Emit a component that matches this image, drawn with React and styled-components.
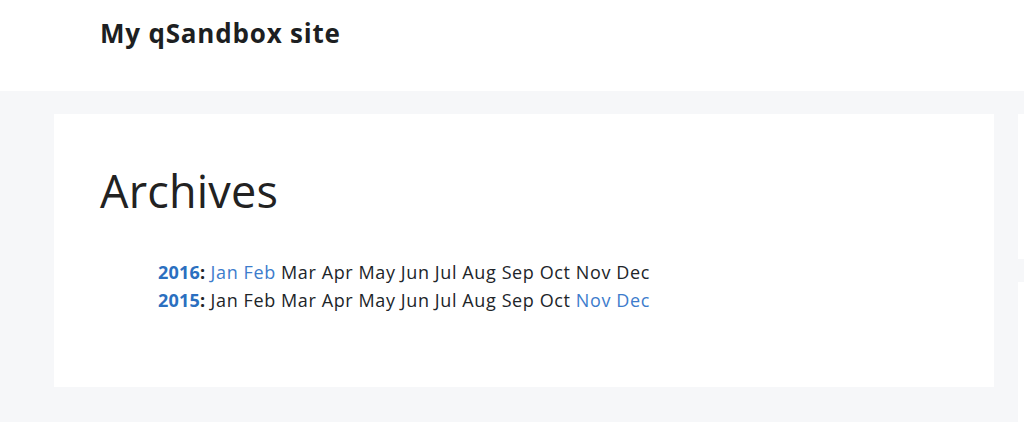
import React from "react";
import styled, { createGlobalStyle } from "styled-components";

const Global = createGlobalStyle`
  html, body { margin: 0; padding: 0; background: #f6f7f9; }
  body { font-family: "Open Sans", "Noto Sans", sans-serif; color: #212529; }
`;

const Header = styled.header`
  background: #fff;
  height: 91px;
  padding-left: 100px;
  box-sizing: border-box;
`;

const SiteTitle = styled.div`
  font-size: 26px;
  font-weight: 700;
  line-height: 1;
  padding-top: 20px;
  color: #1d1f22;
  letter-spacing: 0.8px;
`;

const Body = styled.div`
  display: grid;
  grid-template-columns: 940px 320px;
  gap: 24px;
  padding: 23px 0 0 54px;
  width: 100%;
  box-sizing: border-box;
  overflow: hidden;
`;

const Card = styled.main`
  background: #fff;
  height: 273px;
  box-sizing: border-box;
  padding: 50px 46px 0;
`;

const Side = styled.aside`
  display: flex;
  flex-direction: column;
  gap: 23px;
`;

const SideCard = styled.div`
  background: #fff;
  height: ${(p) => p.$h}px;
`;

const Title = styled.h1`
  margin: 0;
  font-size: 45px;
  font-weight: 400;
  line-height: 54px;
  letter-spacing: 0.2px;
  color: #222;
`;

const List = styled.ul`
  list-style: none;
  margin: 40px 0 0;
  padding-left: 58px;
  font-size: 18px;
  line-height: 28px;
  letter-spacing: 0.6px;
`;

const Year = styled.strong`
  color: #2b6fc0;
  font-weight: 700;
  letter-spacing: 0.2px;
  & span { color: #212529; }
`;

const Month = styled.span`
  color: ${(p) => (p.$link ? "#3d7ccc" : "#212529")};
`;

const months = ["Jan","Feb","Mar","Apr","May","Jun","Jul","Aug","Sep","Oct","Nov","Dec"];
const data = [
  { year: 2016, links: ["Jan", "Feb"] },
  { year: 2015, links: ["Nov", "Dec"] },
];

export default function App() {
  return (
    <>
      <Global />
      <Header>
        <SiteTitle>My qSandbox site</SiteTitle>
      </Header>
      <Body>
        <Card>
          <Title>Archives</Title>
          <List>
            {data.map((d) => (
              <li key={d.year}>
                <Year>{d.year}<span>:</span></Year>
                {months.map((m) => (
                  <React.Fragment key={m}>
                    {" "}
                    <Month $link={d.links.includes(m)}>{m}</Month>
                  </React.Fragment>
                ))}
              </li>
            ))}
          </List>
        </Card>
        <Side>
          <SideCard $h={145} />
          <SideCard $h={140} />
        </Side>
      </Body>
    </>
  );
}
